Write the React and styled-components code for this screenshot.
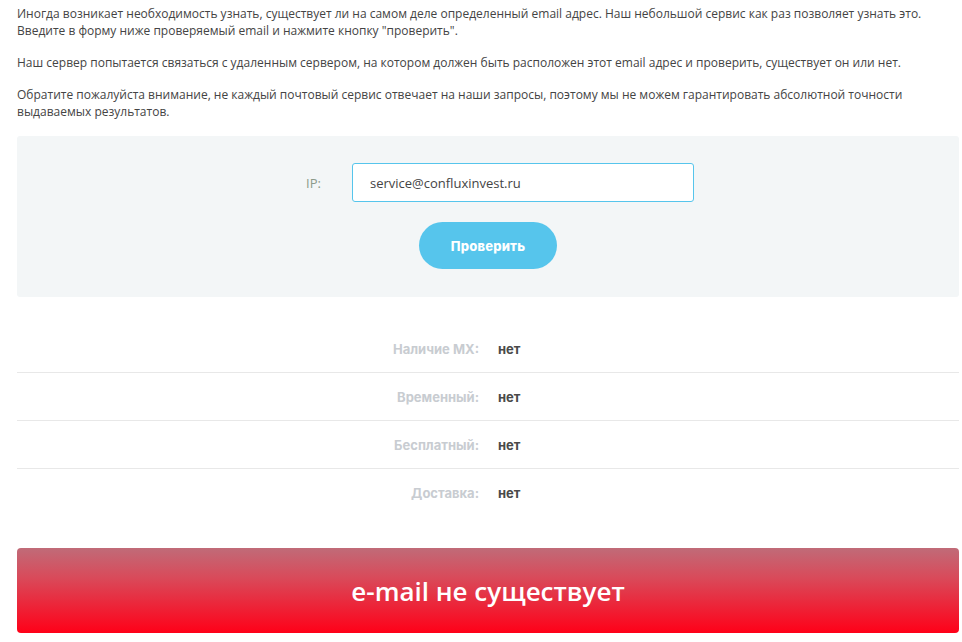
import React from 'react'
import styled, { createGlobalStyle } from 'styled-components'

const Global = createGlobalStyle`
  body {
    margin: 0;
    background: #fff;
    font-family: "Open Sans", "Noto Sans", sans-serif;
    color: #444;
  }
`

const Page = styled.div`
  padding: 5px 3px 0 17px;
`

const Text = styled.p`
  margin: 0 0 15px;
  font-size: 12px;
  line-height: 17px;
  color: #444;
`

const Panel = styled.div`
  margin-top: 16px;
  background: #f3f6f7;
  border-radius: 3px;
  height: 161px;
  box-sizing: border-box;
  padding-top: 27px;
  display: flex;
  flex-direction: column;
  align-items: center;
`

const Field = styled.div`
  display: flex;
  align-items: center;
  margin-left: 24px;
`

const Label = styled.label`
  width: 46px;
  font-size: 13px;
  color: #8c9a8a;
`

const Input = styled.input`
  width: 342px;
  height: 39px;
  box-sizing: border-box;
  border: 1px solid #56c5ec;
  border-radius: 3px;
  padding: 0 17px;
  font-family: "Open Sans", sans-serif;
  font-size: 13px;
  color: #444;
  background: #fff;
  outline: none;
`

const Button = styled.button`
  margin-top: 20px;
  width: 138px;
  height: 47px;
  border: none;
  border-radius: 24px;
  background: #56c5ec;
  color: #fff;
  font-family: Inter, Roboto, sans-serif;
  font-weight: 800;
  font-size: 13px;
  letter-spacing: 0.2px;
  cursor: pointer;
`

const Results = styled.div`
  margin-top: 28px;
`

const Row = styled.div`
  display: grid;
  grid-template-columns: 462px 1fr;
  column-gap: 19px;
  align-items: center;
  height: 48px;
  box-sizing: border-box;
  border-bottom: ${p => (p.last ? 'none' : '1px solid #e8e8e8')};
  font-family: Inter, Roboto, sans-serif;
  font-weight: 700;
  font-size: 13px;
`

const Key = styled.span`
  text-align: right;
  color: #c8ccd1;
`

const Value = styled.span`
  color: #4a4a4a;
`

const Banner = styled.div`
  margin-top: 31px;
  height: 85px;
  border-radius: 4px;
  background: linear-gradient(to bottom, #c06b78 0%, #d94a5a 35%, #ff0018 100%);
  display: flex;
  align-items: center;
  justify-content: center;
  color: #fff;
  font-family: "Open Sans", sans-serif;
  font-weight: 600;
  font-size: 26px;
`

const rows = [
  ['Наличие MX:', 'нет'],
  ['Временный:', 'нет'],
  ['Бесплатный:', 'нет'],
  ['Доставка:', 'нет'],
]

export default function App() {
  return (
    <Page>
      <Global />
      <Text>
        Иногда возникает необходимость узнать, существует ли на самом деле определенный email адрес. Наш небольшой сервис как раз позволяет узнать это.
        <br />
        Введите в форму ниже проверяемый email и нажмите кнопку "проверить".
      </Text>
      <Text>
        Наш сервер попытается связаться с удаленным сервером, на котором должен быть расположен этот email адрес и проверить, существует он или нет.
      </Text>
      <Text>
        Обратите пожалуйста внимание, не каждый почтовый сервис отвечает на наши запросы, поэтому мы не можем гарантировать абсолютной точности
        <br />
        выдаваемых результатов.
      </Text>
      <Panel>
        <Field>
          <Label>IP:</Label>
          <Input defaultValue="service@confluxinvest.ru" />
        </Field>
        <Button>Проверить</Button>
      </Panel>
      <Results>
        {rows.map(([k, v], i) => (
          <Row key={k} last={i === rows.length - 1}>
            <Key>{k}</Key>
            <Value>{v}</Value>
          </Row>
        ))}
      </Results>
      <Banner>e-mail не существует</Banner>
    </Page>
  )
}
